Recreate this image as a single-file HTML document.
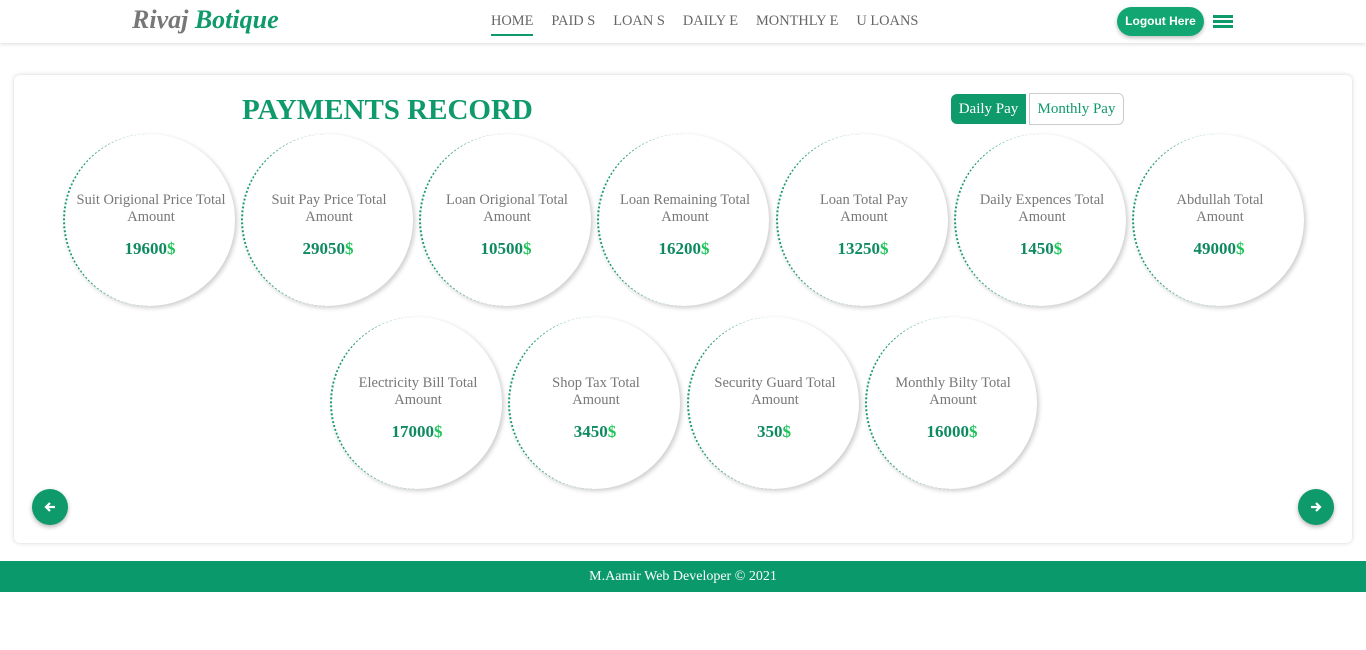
<!DOCTYPE html>
<html><head><meta charset="utf-8">
<style>
*{margin:0;padding:0;box-sizing:border-box}
body{width:1366px;height:650px;background:#fff;font-family:"Liberation Serif",serif;position:relative;overflow:hidden}
.nav{position:absolute;left:0;top:0;width:1366px;height:43px;background:#fff;box-shadow:0 1px 4px rgba(0,0,0,.15)}
.logo{position:absolute;left:132px;top:5px;font-size:26px;font-weight:bold;font-style:italic;font-family:"Liberation Serif",serif}
.logo .a{color:#777}.logo .b{color:#0f9a6b}
.links{position:absolute;left:491px;top:13px;font-size:14.4px;color:#666;white-space:nowrap}
.links span{margin-right:18px;position:relative}
.links .act:after{content:"";position:absolute;left:0;right:0;top:21px;height:2px;background:#0f9a6b}
.logout{position:absolute;left:1117px;top:7px;width:87px;height:29px;border-radius:15px;background:#12a772;color:#fff;font:bold 12px "Liberation Sans",sans-serif;text-align:center;line-height:29px;box-shadow:0 2px 4px rgba(0,0,0,.25)}
.ham{position:absolute;left:1213px;top:15px;width:20px}
.ham i{display:block;height:3px;background:#0f9a6b;margin-bottom:2px}
.card{position:absolute;left:14px;top:75px;width:1338px;height:468px;background:#fff;border-radius:6px;box-shadow:0 0 5px rgba(0,0,0,.18)}
h1{position:absolute;left:242px;top:94px;font-size:29px;color:#0f9a6b;font-weight:bold}
.dp{position:absolute;left:951px;top:94px;width:75px;height:30px;background:#0f9a6b;color:#fff;font-size:15px;line-height:30px;text-align:center;border-radius:6px 0 0 6px}
.mp{position:absolute;left:1029px;top:93px;width:95px;height:32px;border:1px solid #ccc;border-radius:0 6px 6px 0;color:#0f9a6b;font-size:15px;line-height:30px;text-align:center}
.c{position:absolute;width:172px;height:172px;border-radius:50%;border-left:2px dotted #1a9a70;box-shadow:2px 2px 5px rgba(0,0,0,.2);background:#fff;text-align:center}
.c p{position:absolute;left:12px;right:10px;top:58px;font-size:14.5px;color:#777;line-height:17px}
.c.n p{left:28px;right:26px}
.c.w p{left:6px;right:4px}
.c b{position:absolute;left:0;right:0;top:105px;font-size:17px;color:#0f8a60}
.c b span{color:#1dc45a}
.arr{position:absolute;width:36px;height:36px;border-radius:50%;background:#0f9a6b;box-shadow:0 2px 5px rgba(0,0,0,.3)}
.arr svg{position:absolute;left:12px;top:12px}
.foot{position:absolute;left:0;top:561px;width:1366px;height:31px;background:#0a996a;color:#fff;font-size:14px;text-align:center;line-height:31px}
</style></head><body>
<div class="nav">
<div class="logo"><span class="a">Rivaj</span> <span class="b">Botique</span></div>
<div class="links"><span class="act">HOME</span><span>PAID S</span><span>LOAN S</span><span>DAILY E</span><span>MONTHLY E</span><span>U LOANS</span></div>
<div class="logout">Logout Here</div>
<div class="ham"><i></i><i></i><i></i></div>
</div>
<div class="card"></div>
<h1>PAYMENTS RECORD</h1>
<div class="dp">Daily Pay</div><div class="mp">Monthly Pay</div>

<div class="c w" style="left:63px;top:134px"><p>Suit Origional Price Total Amount</p><b>19600<span>$</span></b></div>
<div class="c" style="left:241px;top:134px"><p>Suit Pay Price Total Amount</p><b>29050<span>$</span></b></div>
<div class="c" style="left:419px;top:134px"><p>Loan Origional Total Amount</p><b>10500<span>$</span></b></div>
<div class="c" style="left:597px;top:134px"><p>Loan Remaining Total Amount</p><b>16200<span>$</span></b></div>
<div class="c n" style="left:776px;top:134px"><p>Loan Total Pay Amount</p><b>13250<span>$</span></b></div>
<div class="c" style="left:954px;top:134px"><p>Daily Expences Total Amount</p><b>1450<span>$</span></b></div>
<div class="c n" style="left:1132px;top:134px"><p>Abdullah Total Amount</p><b>49000<span>$</span></b></div>

<div class="c" style="left:330px;top:317px"><p>Electricity Bill Total Amount</p><b>17000<span>$</span></b></div>
<div class="c n" style="left:508px;top:317px"><p>Shop Tax Total Amount</p><b>3450<span>$</span></b></div>
<div class="c" style="left:687px;top:317px"><p>Security Guard Total Amount</p><b>350<span>$</span></b></div>
<div class="c" style="left:865px;top:317px"><p>Monthly Bilty Total Amount</p><b>16000<span>$</span></b></div>

<div class="arr" style="left:32px;top:489px"><svg width="12" height="12" viewBox="0 0 12 12"><path d="M11 6H3M6 2L2 6l4 4" stroke="#fff" stroke-width="2.2" fill="none"/></svg></div>
<div class="arr" style="left:1298px;top:489px"><svg width="12" height="12" viewBox="0 0 12 12"><path d="M1 6h8M6 2l4 4-4 4" stroke="#fff" stroke-width="2.2" fill="none"/></svg></div>
<div class="foot">M.Aamir Web Developer © 2021</div>
</body></html>
